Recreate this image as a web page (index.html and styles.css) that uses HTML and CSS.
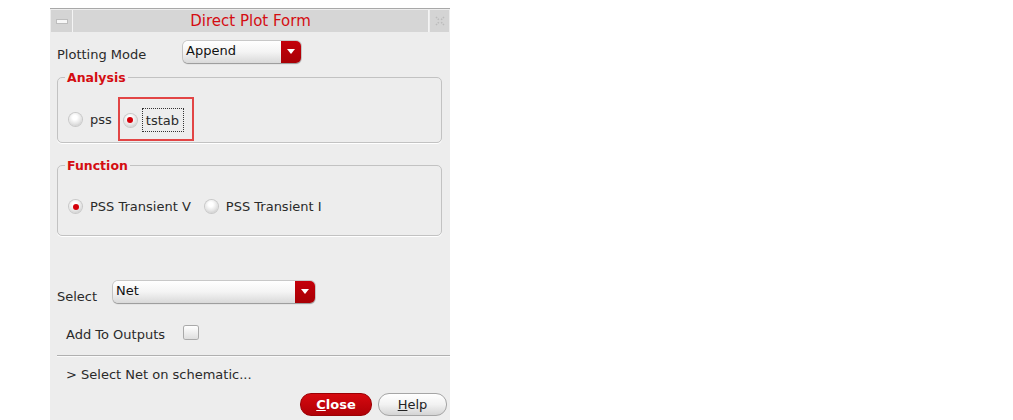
FILE: index.html
```html
<!DOCTYPE html>
<html>
<head>
<meta charset="utf-8">
<link rel="stylesheet" href="styles.css">
</head>
<body>
<div class="dialog">
  <div class="titlebar">
    <div class="tb-btn tb-left"><span class="dash"></span></div>
    <div class="tb-title">Direct Plot Form</div>
    <div class="tb-btn tb-right"><svg width="12" height="12" viewBox="0 0 12 12"><path d="M2 2 L5 5 M10 2 L7 5 M2 10 L5 7 M10 10 L7 7" stroke="#bbb" stroke-width="1.5" fill="none" stroke-dasharray="1.5 1"/></svg></div>
  </div>
  <div class="content">
    <div class="row mode-row">
      <span class="label">Plotting Mode</span>
      <div class="combo combo-mode"><span class="combo-text">Append</span><span class="combo-arrow"></span></div>
    </div>

    <fieldset class="group analysis">
      <legend>Analysis</legend>
      <div class="radios">
        <label class="radio"><span class="rb"></span><span class="rtext">pss</span></label>
        <label class="radio hl"><span class="rb on"></span><span class="rtext focus">tstab</span></label>
      </div>
    </fieldset>

    <fieldset class="group function">
      <legend>Function</legend>
      <div class="radios">
        <label class="radio"><span class="rb on"></span><span class="rtext">PSS Transient V</span></label>
        <label class="radio"><span class="rb"></span><span class="rtext">PSS Transient I</span></label>
      </div>
    </fieldset>

    <div class="row select-row">
      <span class="label">Select</span>
      <div class="combo combo-select"><span class="combo-text">Net</span><span class="combo-arrow"></span></div>
    </div>

    <div class="row add-row">
      <span class="label">Add To Outputs</span>
      <span class="check"></span>
    </div>
  </div>
  <div class="sep"></div>
  <div class="message">&gt; Select Net on schematic...</div>
  <div class="buttons">
    <button class="btn btn-close"><u>C</u>lose</button>
    <button class="btn btn-help"><u>H</u>elp</button>
  </div>
</div>
</body>
</html>
```

FILE: styles.css
```css
html, body {
  margin: 0;
  padding: 0;
  background: #ffffff;
}
body {
  font-family: "DejaVu Sans", "Liberation Sans", sans-serif;
  font-size: 13px;
  color: #222;
}
.dialog {
  margin-left: 50px;
  margin-top: 8px;
  width: 400px;
  height: 412px;
  background: #ededed;
  border-top: 1px solid #a8a8a8;
  box-sizing: border-box;
}
.titlebar {
  display: flex;
  height: 22px;
  margin-top: 1px;
}
.tb-btn {
  background: #d4d4d4;
  display: flex;
  align-items: center;
  justify-content: center;
  box-sizing: border-box;
}
.tb-left {
  width: 22px;
  margin-left: 1px;
  border-right: 1px solid #f4f4f4;
}
.dash {
  width: 10px;
  height: 3px;
  background: #f7f7f7;
  border: 1px solid #bdbdbd;
}
.tb-title {
  flex: 1;
  background: #d6d6d6;
  color: #d40d12;
  font-size: 15px;
  text-align: center;
  line-height: 22px;
  border-right: 1px solid #f4f4f4;
}
.tb-right {
  width: 19px;
  margin-left: 1px;
  margin-right: 1px;
}
.content {
  padding-left: 7px;
}
.row {
  display: flex;
  align-items: center;
}
.label {
  color: #2a2a2a;
}
.mode-row {
  margin-top: 8px;
  height: 23px;
}
.mode-row .label {
  width: 126px;
  position: relative;
  top: 3px;
}
.combo {
  height: 22px;
  display: flex;
  border-radius: 5px;
  overflow: hidden;
  box-shadow: 0 1px 1px #9a9a9a, 0 0 0 1px #c8c8c8;
}
.combo-text {
  flex: 1;
  background: linear-gradient(#ffffff, #f4f4f4 50%, #d9d9d9);
  padding-left: 3px;
  line-height: 19px;
  font-size: 13px;
  color: #111;
}
.combo-arrow {
  width: 20px;
  background: linear-gradient(#c4000a, #a80005);
  position: relative;
}
.combo-arrow::after {
  content: "";
  position: absolute;
  left: 6px;
  top: 8px;
  border-left: 4px solid transparent;
  border-right: 4px solid transparent;
  border-top: 5px solid #ffffff;
}
.combo-mode {
  width: 118px;
}
.group {
  margin: 0;
  padding: 0;
  border: 1px solid #c2c2c2;
  border-radius: 5px;
  width: 385px;
  box-sizing: border-box;
  box-shadow: 0 1px 0 #ffffff;
}
.group legend {
  color: #d40d12;
  font-weight: bold;
  font-size: 12.5px;
  margin-left: 7px;
  padding: 0 2px;
}
.analysis {
  margin-top: 7px;
  height: 73px;
}
.function {
  margin-top: 15px;
  height: 78px;
}
.radios {
  display: flex;
  align-items: center;
  padding-left: 11px;
}
.analysis .radios {
  margin-top: 14px;
  height: 40px;
}
.function .radios {
  margin-top: 26px;
}
.radio {
  display: flex;
  align-items: center;
}
.rb {
  width: 13px;
  height: 13px;
  border-radius: 50%;
  background: radial-gradient(circle at 45% 35%, #ffffff 20%, #e2e2e2 60%, #b5b5b5);
  box-shadow: 0 0 0 1px #c9c9c9;
  position: relative;
  margin-right: 8px;
  flex: none;
}
.rb.on::after {
  content: "";
  position: absolute;
  left: 3.5px;
  top: 3.5px;
  width: 6px;
  height: 6px;
  border-radius: 50%;
  background: #d4000a;
}
.rtext {
  color: #2a2a2a;
  font-size: 13px;
}
.analysis .radio:first-child {
  margin-right: 8px;
}
.function .radio:first-child {
  margin-right: 14px;
}
.radio.hl {
  outline: 2px solid #e24545;
  box-sizing: border-box;
  height: 40px;
  padding: 8px 8px 6px 4px;
}
.radio.hl .rb {
  margin-right: 5px;
}
.rtext.focus {
  border: 1px dotted #333;
  height: 24px;
  box-sizing: border-box;
  display: flex;
  align-items: center;
  padding: 0 4px 0 3px;
}
.select-row {
  margin-top: 45px;
  height: 22px;
}
.select-row .label {
  width: 56px;
  position: relative;
  top: 4px;
}
.combo-select {
  width: 202px;
}
.add-row {
  margin-top: 23px;
  padding-left: 9px;
}
.add-row .label {
  width: 118px;
  position: relative;
  top: 1px;
}
.check {
  width: 14px;
  height: 13px;
  border-radius: 2px;
  background: linear-gradient(#ffffff, #dedede);
  box-shadow: 0 0 0 1px #a9a9a9;
  position: relative;
  top: -1px;
}
.sep {
  margin-top: 14px;
  margin-left: 7px;
  height: 1px;
  background: #b0b0b0;
  border-bottom: 1px solid #fafafa;
}
.message {
  margin-top: 10px;
  padding-left: 16px;
  color: #2a2a2a;
  font-size: 13px;
}
.buttons {
  display: flex;
  justify-content: flex-end;
  gap: 6px;
  padding-right: 3px;
  margin-top: 11px;
}
.btn {
  height: 23px;
  border-radius: 11px;
  font-family: "DejaVu Sans", "Liberation Sans", sans-serif;
  font-size: 13px;
  padding: 0;
  cursor: default;
}
.btn-close {
  width: 72px;
  background: linear-gradient(#d60a10, #b00006);
  color: #ffffff;
  font-weight: bold;
  border: 1px solid #9b0004;
}
.btn-help {
  width: 69px;
  background: linear-gradient(#ffffff, #f2f2f2 50%, #d4d4d4);
  color: #222;
  border: 1px solid #a5a5a5;
}
```
